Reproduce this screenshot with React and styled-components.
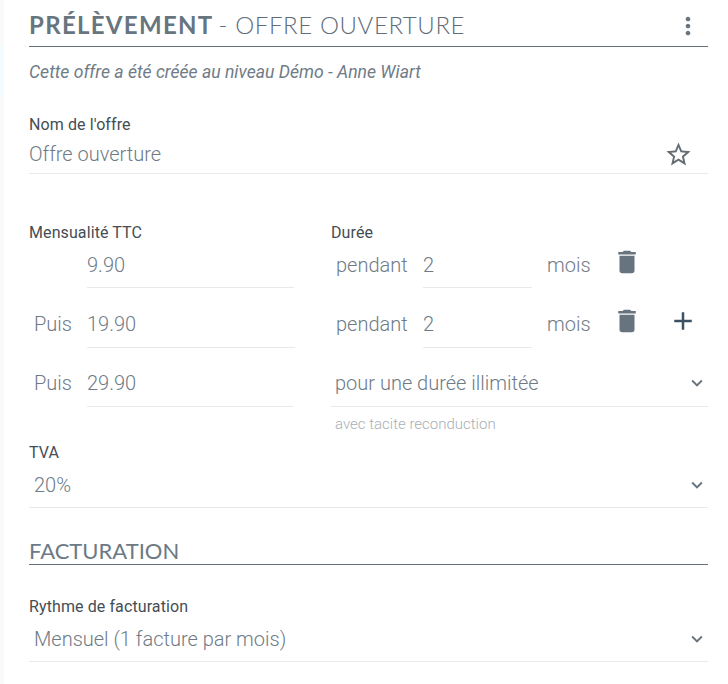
import React from 'react'
import styled, { createGlobalStyle } from 'styled-components'
import { MdDelete, MdAdd, MdStarBorder, MdMoreVert, MdExpandMore } from 'react-icons/md'

const GlobalStyle = createGlobalStyle`
  html, body {
    margin: 0;
    padding: 0;
    background: #fff;
  }
  body {
    font-family: Roboto, "Liberation Sans", sans-serif;
    color: #68757f;
  }
`

const Page = styled.div`
  display: flex;
  width: 728px;
  height: 684px;
  overflow: hidden;
`
const Rail = styled.div`
  width: 4px;
  background: #fafafa;
  padding-top: 45px;
  flex-shrink: 0;
`
const RailMark = styled.div`
  height: 51px;
  background: #f2fbfd;
  border-radius: 0 4px 4px 0;
`
const Content = styled.div`
  width: 679px;
  margin-left: 25px;
`
const Title = styled.div`
  display: flex;
  align-items: center;
  justify-content: space-between;
  height: 43px;
  padding-top: 3px;
  border-bottom: 1px solid #5f6f7c;
  font-family: Lato, sans-serif;
  font-size: 24px;
  letter-spacing: 0.6px;
  color: #5f6d78;

  b {
    font-weight: 700;
    letter-spacing: 1.3px;
    margin-right: -2px;
    color: #67757f;
  }
`
const TitleText = styled.span`
  font-weight: 300;
`
const MenuIcon = styled(MdMoreVert)`
  font-size: 28px;
  color: #68757f;
  margin: 2px 6px 0 0;
`
const Note = styled.div`
  margin-top: 15px;
  font-size: 17.6px;
  line-height: 20px;
  font-style: italic;
  color: #6f7c87;
`
const Label = styled.div`
  font-size: 16px;
  line-height: 19px;
  margin-bottom: -1px;
  color: #454d54;
  letter-spacing: 0.1px;
`
const NameField = styled.div`
  margin-top: 33px;
`
const Line = styled.div`
  display: flex;
  align-items: center;
  justify-content: space-between;
  box-sizing: border-box;
  height: ${({ $h }) => $h || 47}px;
  padding: ${({ $top }) => $top || 2}px 0 0 ${({ $inset }) => $inset || 0}px;
  border-bottom: 1px solid #e8e9ea;
  font-size: 20px;
  font-weight: 300;
  color: #6e7b86;
`
const Star = styled(MdStarBorder)`
  font-size: 29px;
  color: #646c73;
  margin-right: 15px;
`
const Plan = styled.div`
  display: grid;
  grid-template-columns: 302px 377px;
  margin-top: 49px;
`
const Column = styled.div`
  display: flex;
  flex-direction: column;
`
const Row = styled.div`
  --pad: ${({ $pad }) => $pad}px;
  display: flex;
  align-items: flex-end;
  height: ${({ $h }) => $h}px;
`
const Prefix = styled.span`
  width: 58px;
  padding: 0 0 calc(var(--pad) + 1px) 5px;
  box-sizing: border-box;
  font-size: 20px;
  line-height: 24px;
  font-weight: 300;
  color: #6e7b86;
  flex-shrink: 0;
`
const Input = styled.div`
  width: ${({ $w }) => $w}px;
  padding-bottom: var(--pad);
  border-bottom: 1px solid #e8e9ea;
  font-size: 20px;
  line-height: 24px;
  font-weight: 300;
  color: #6e7b86;
  flex-shrink: 0;
`
const Word = styled.span`
  font-size: 20px;
  line-height: 24px;
  font-weight: 300;
  color: #6e7b86;
  width: ${({ $w }) => $w}px;
  padding: 0 0 calc(var(--pad) + 1px) ${({ $l }) => $l || 0}px;
  box-sizing: border-box;
  flex-shrink: 0;
`
const Trash = styled(MdDelete)`
  font-size: 30px;
  color: #67747f;
  margin: 0 0 ${({ $b }) => $b}px 14px;
`
const Plus = styled(MdAdd)`
  font-size: 30px;
  color: #3c5163;
  margin: 0 0 12px 26px;
`
const Chevron = styled(MdExpandMore)`
  font-size: 22px;
  color: #68757f;
`
const Hint = styled.div`
  margin-top: 9px;
  padding-left: 4px;
  font-size: 15px;
  line-height: 16px;
  font-weight: 300;
  color: #a9afb5;
`
const Vat = styled.div`
  margin-top: 11px;
`
const Section = styled.div`
  margin-top: 29px;
  height: 27px;
  border-bottom: 1px solid #5f6f7c;
  font-family: Lato, sans-serif;
  font-size: 22px;
  line-height: 27px;
  color: #6b7a85;
`
const Billing = styled.div`
  margin-top: 32px;
`

const App = () => (
  <>
    <GlobalStyle />
    <Page>
      <Rail>
        <RailMark />
      </Rail>
      <Content>
        <Title>
          <TitleText>
            <b>PRÉLÈVEMENT</b> - OFFRE OUVERTURE
          </TitleText>
          <MenuIcon />
        </Title>
        <Note>Cette offre a été créée au niveau Démo - Anne Wiart</Note>
        <NameField>
          <Label>Nom de l'offre</Label>
          <Line $h={41}>
            Offre ouverture
            <Star />
          </Line>
        </NameField>
        <Plan>
          <Column>
            <Label>Mensualité TTC</Label>
            <Row $h={47} $pad={10}>
              <Prefix />
              <Input $w={207}>9.90</Input>
            </Row>
            <Row $h={60} $pad={11}>
              <Prefix>Puis</Prefix>
              <Input $w={208}>19.90</Input>
            </Row>
            <Row $h={59} $pad={11}>
              <Prefix>Puis</Prefix>
              <Input $w={206}>29.90</Input>
            </Row>
          </Column>
          <Column>
            <Label>Durée</Label>
            <Row $h={47} $pad={10}>
              <Word $w={92} $l={5}>pendant</Word>
              <Input $w={109}>2</Input>
              <Word $w={66} $l={15}>mois</Word>
              <Trash $b={11} />
            </Row>
            <Row $h={60} $pad={11}>
              <Word $w={92} $l={5}>pendant</Word>
              <Input $w={109}>2</Input>
              <Word $w={66} $l={15}>mois</Word>
              <Trash $b={12} />
              <Plus />
            </Row>
            <Line $h={59} $top={11} $inset={4}>
              pour une durée illimitée
              <Chevron />
            </Line>
            <Hint>avec tacite reconduction</Hint>
          </Column>
        </Plan>
        <Vat>
          <Label>TVA</Label>
          <Line $inset={5}>
            20%
            <Chevron />
          </Line>
        </Vat>
        <Section>FACTURATION</Section>
        <Billing>
          <Label>Rythme de facturation</Label>
          <Line $inset={5}>
            Mensuel (1 facture par mois)
            <Chevron />
          </Line>
        </Billing>
      </Content>
    </Page>
  </>
)

export default App
